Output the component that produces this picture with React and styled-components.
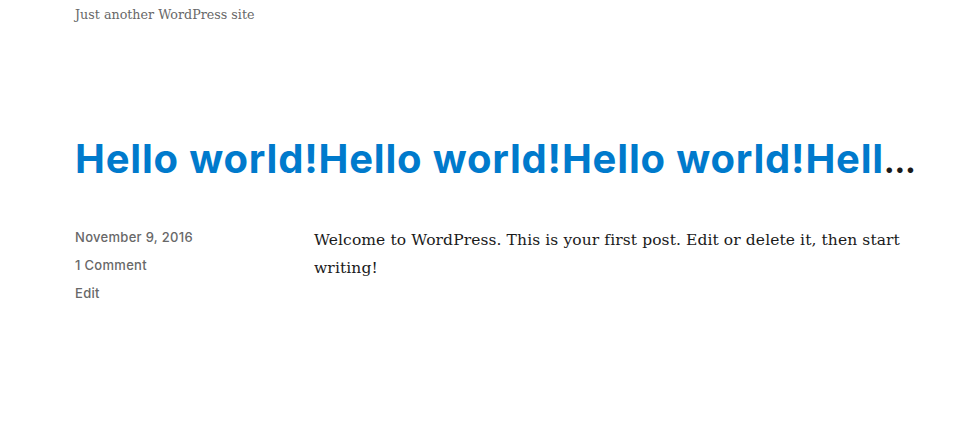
import styled, { createGlobalStyle } from 'styled-components'

const GlobalStyle = createGlobalStyle`
    html, body {
        margin: 0;
        padding: 0;
        background: #fff;
    }
    body {
        font-family: 'DejaVu Serif', serif;
        color: #1a1a1a;
    }
    a {
        text-decoration: none;
    }
`

const App = () => {
    return (
        <Page>
            <GlobalStyle />
            <Header>
                <Tagline>Just another WordPress site</Tagline>
            </Header>
            <Article>
                <EntryTitle>
                    <a href='#'>Hello world!Hello world!Hello world!Hell</a>
                    <Ellipsis>…</Ellipsis>
                </EntryTitle>
                <EntryBody>
                    <EntryFooter>
                        <MetaItem>November 9, 2016</MetaItem>
                        <MetaItem>1 Comment</MetaItem>
                        <MetaItem>Edit</MetaItem>
                    </EntryFooter>
                    <EntryContent>
                        <p>
                            Welcome to WordPress. This is your first post. Edit or delete it, then start writing!
                        </p>
                    </EntryContent>
                </EntryBody>
            </Article>
        </Page>
    )
}

const Page = styled.div`
    width: 835px;
    margin-left: 75px;
`

const Header = styled.header`
    padding-top: 4px;
`

const Tagline = styled.p`
    margin: 0;
    font-family: 'DejaVu Serif', serif;
    font-size: 12.7px;
    line-height: 21px;
    color: #686868;
`

const Article = styled.article`
    margin-top: 109px;
`

const EntryTitle = styled.h2`
    margin: 0;
    height: 49px;
    font-family: Inter, 'Liberation Sans', sans-serif;
    font-weight: 700;
    font-size: 40px;
    line-height: 49px;
    letter-spacing: 0.8px;
    color: #1a1a1a;
    white-space: nowrap;
    a {
        color: #007acc;
    }
`

const Ellipsis = styled.span`
    font-weight: 800;
    letter-spacing: -3px;
    font-size: 30px;
    line-height: 1;
`

const EntryBody = styled.div`
    display: flex;
    margin-top: 43px;
`

const EntryFooter = styled.footer`
    width: 239px;
    flex-shrink: 0;
    padding-top: 1px;
`

const MetaItem = styled.div`
    font-family: Inter, 'Liberation Sans', sans-serif;
    font-size: 13px;
    font-weight: 500;
    letter-spacing: 0.3px;
    line-height: 21px;
    color: #686868;
    margin-bottom: 7px;
`

const EntryContent = styled.div`
    width: 596px;
    p {
        margin: 0;
        font-family: 'DejaVu Serif', serif;
        font-size: 15.5px;
        letter-spacing: 0.1px;
        line-height: 28px;
        color: #1a1a1a;
    }
`

export default App
